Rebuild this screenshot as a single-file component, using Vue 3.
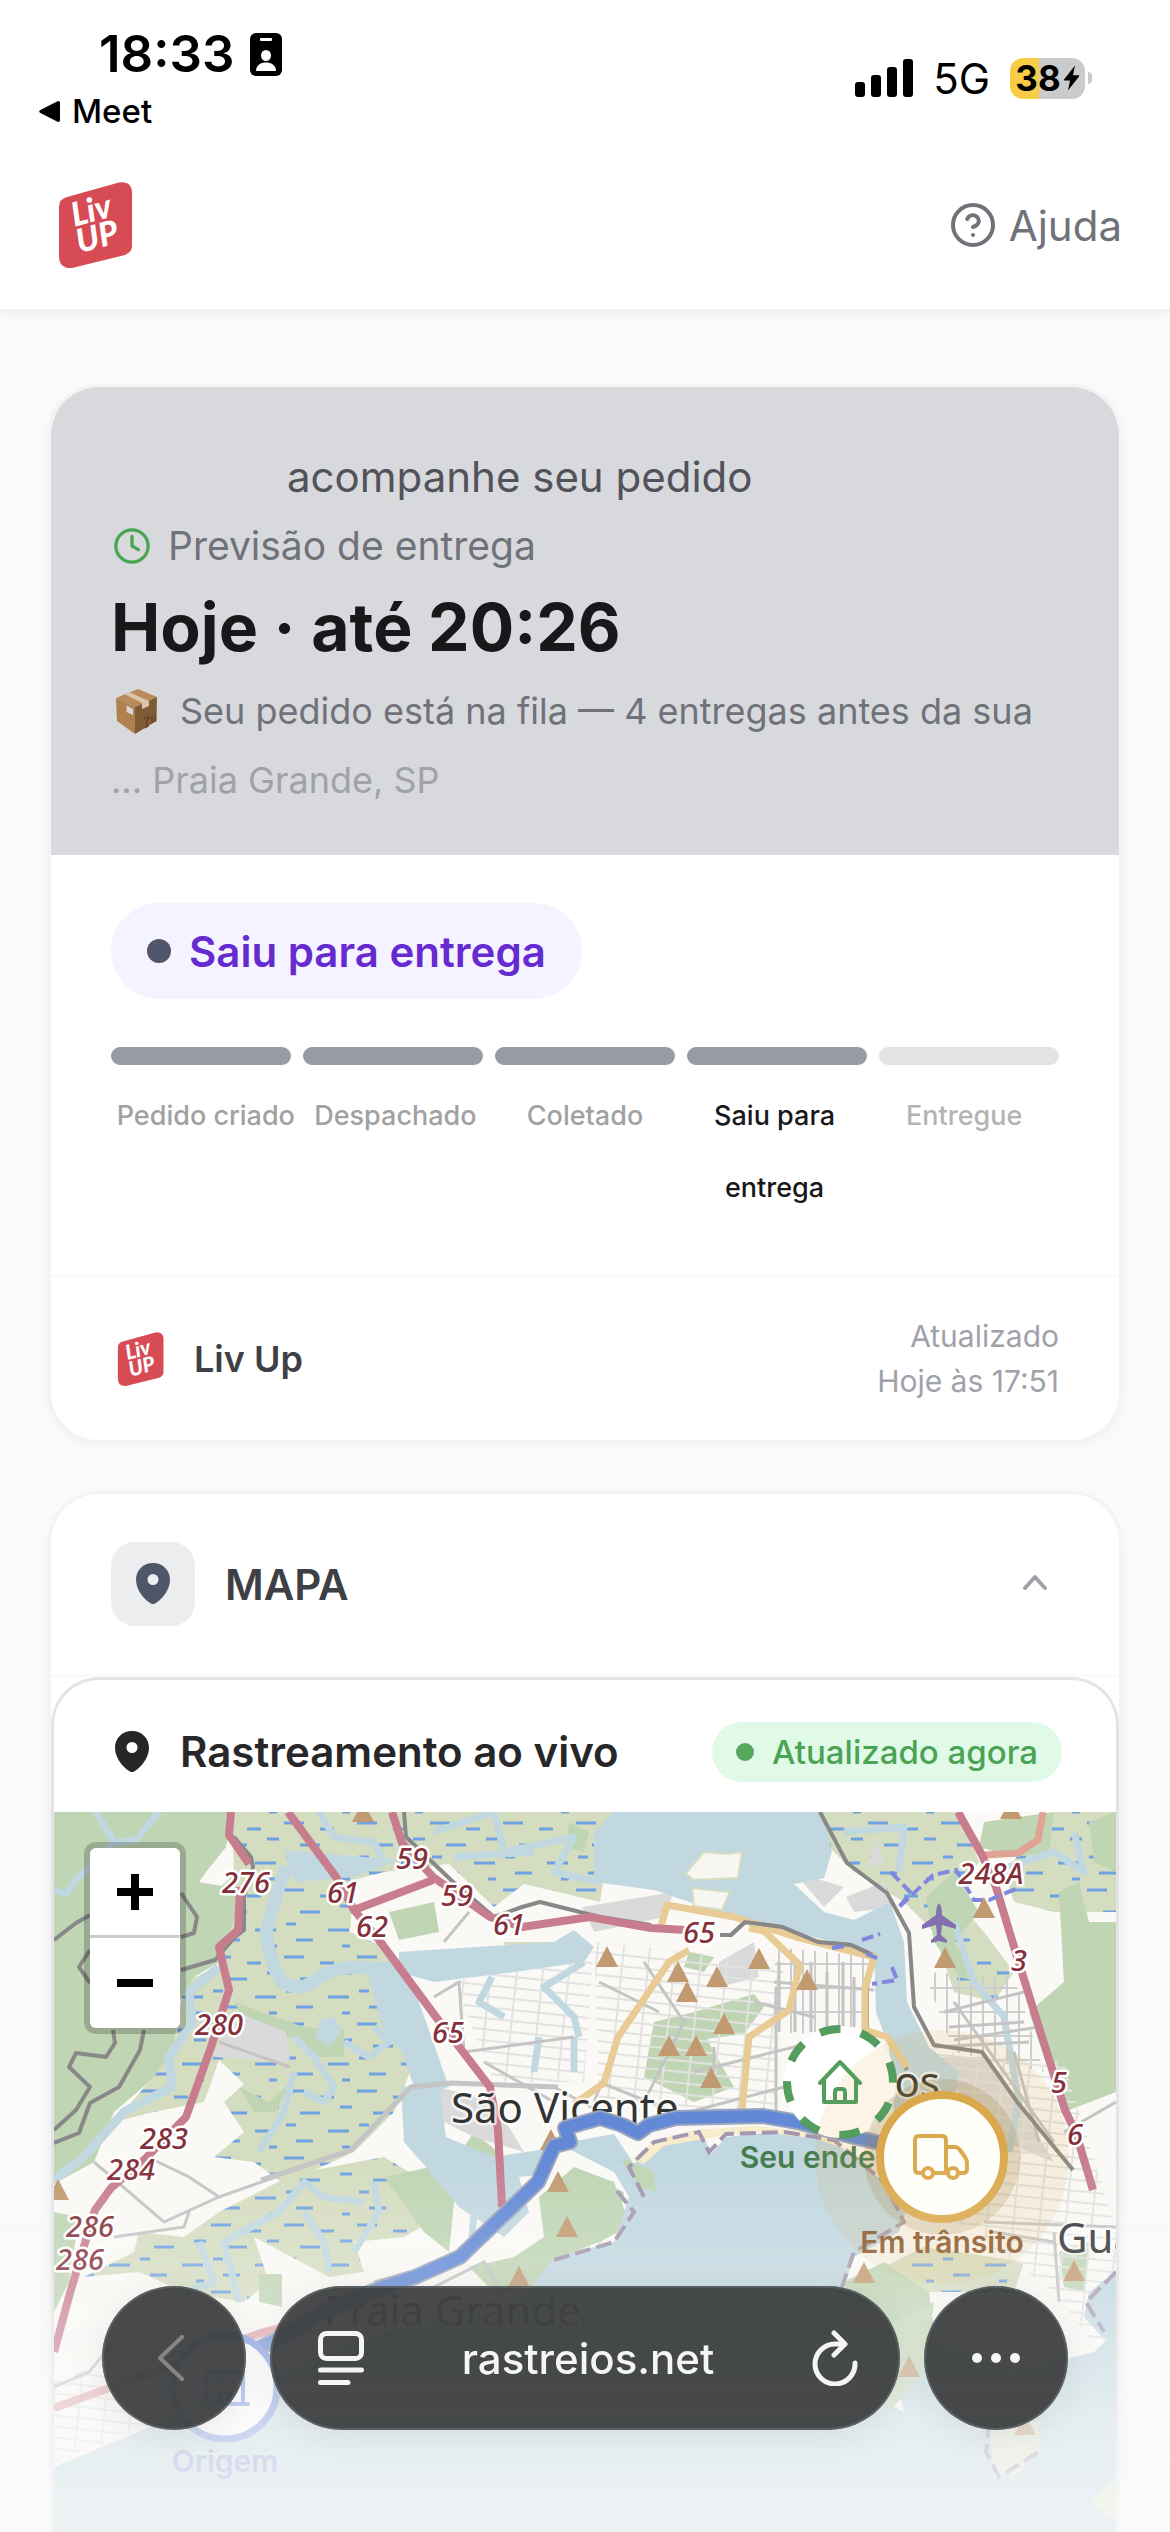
<script setup>
import { ref } from 'vue'

const steps = [
  { label: 'Pedido criado', state: 'done' },
  { label: 'Despachado', state: 'done' },
  { label: 'Coletado', state: 'done' },
  { label: 'Saiu para entrega', state: 'current' },
  { label: 'Entregue', state: 'pending' },
]

const mapOpen = ref(true)

const roadRefs = [
  ['276', 192, 81], ['61', 289, 91], ['62', 318, 125], ['59', 358, 57], ['59', 403, 94],
  ['61', 455, 123], ['65', 394, 231], ['280', 165, 223], ['283', 110, 337], ['284', 77, 368],
  ['286', 36, 425], ['286', 26, 458], ['65', 645, 131], ['248A', 937, 72], ['3', 965, 159],
  ['5', 1005, 281], ['6', 1021, 333],
]

const peaks = [
  [309, 0], [553, 145], [624, 160], [663, 165], [705, 147], [753, 168], [633, 180], [670, 212],
  [615, 234], [642, 234], [657, 266], [930, 96], [891, 146], [957, -3], [497, 328], [504, 370],
  [513, 415], [465, 465], [4, 378], [810, 461], [1020, 459], [855, 555], [971, 613],
]
</script>

<template>
  <div class="page">
    <header class="top">
      <div class="status">
        <div class="status-left">
          <div class="time">
            <span>18:33</span>
            <svg width="32" height="43" viewBox="0 0 32 43" aria-hidden="true">
              <rect width="32" height="43" rx="6" />
              <rect x="10" y="5" width="12" height="3" rx="1" fill="#fff" />
              <ellipse cx="16" cy="22.500" rx="5" ry="5.500" fill="#fff" />
              <path d="M6 38c0-6 5-8.500 10-8.500S26 32 26 38z" fill="#fff" />
            </svg>
          </div>
          <a class="back-app" href="#meet">
            <svg width="21" height="21" viewBox="0 0 21 21" aria-hidden="true">
              <path d="M1 9.300 18.500.300Q21-.500 21 2v17q0 2.500-2.500 1.700L1 11.700Q-.600 10.500 1 9.300z" />
            </svg>
            Meet
          </a>
        </div>
        <div class="status-right">
          <svg width="58" height="38" viewBox="0 0 58 38" aria-hidden="true">
            <rect y="23" width="10" height="15" rx="3" />
            <rect x="16" y="16" width="10" height="22" rx="3" />
            <rect x="32" y="8" width="10" height="30" rx="3" />
            <rect x="48" width="10" height="38" rx="3" />
          </svg>
          <span class="network">5G</span>
          <span class="battery">
            <span class="level">38<svg width="17" height="26" viewBox="0 0 17 26" aria-hidden="true"><path d="M12 .500 1 14.500q-.600 1 .500 1h5.500L5 25.500 16 11.500q.800-1.200-.500-1.200H10z" /></svg></span>
            <span class="tip"></span>
          </span>
        </div>
      </div>
      <nav class="nav">
        <svg class="logo" viewBox="0 0 96 96" role="img" aria-label="Liv Up">
          <path d="M19 20 71 5.500Q84 4 84 16V69Q84 75 77 78L24 91Q11 92 11 79V30Q11 22 19 20Z" fill="#d64b54" />
          <g class="logo-text" transform="rotate(-15 48 48)">
            <text x="47" y="44">Liv</text>
            <text x="46" y="71">UP</text>
          </g>
        </svg>
        <a class="help" href="#ajuda">
          <svg width="48" height="48" viewBox="0 0 24 24" class="line" aria-hidden="true">
            <circle cx="12" cy="12" r="10" />
            <path d="M9.100 9a3 3 0 0 1 5.800 1c0 2-2.900 3-2.900 3M12 17h.010" />
          </svg>
          Ajuda
        </a>
      </nav>
    </header>

    <main class="content">
      <section class="card">
        <div class="summary">
          <p class="follow">acompanhe seu pedido</p>
          <p class="forecast">
            <svg width="42" height="42" viewBox="-1 -1 26 26" class="line clock" aria-hidden="true">
              <circle cx="12" cy="12" r="10" />
              <path d="M12 6v6l4 2.300" />
            </svg>
            Previsão de entrega
          </p>
          <h1>Hoje · até 20:26</h1>
          <p class="queue">
            <svg width="51" height="48" viewBox="0 0 51 48" aria-hidden="true">
              <path d="M5 11 27 2 46 10 24 20z" fill="#b98a5c" />
              <path d="M5 11 24 20V47L6 34z" fill="#b0814f" />
              <path d="M46 10 24 20V47L45.500 34z" fill="#7f5a36" />
              <path d="M14 7.500 19 5.500 38 14V19L31 22V16z" fill="#dcc5a8" />
              <path d="M15.500 18.500 22 22V28L15.500 25z" fill="#d8d8d6" />
              <path d="M33 32l5-2q-.500 4-2.500 4.500v5M34 41l4-2M41 29v7M44 28v7" stroke="#54391f" fill="none" />
            </svg>
            Seu pedido está na fila — 4 entregas antes da sua
          </p>
          <p class="city">... Praia Grande, SP</p>
        </div>

        <div class="progress">
          <div class="state"><span class="state-dot"></span>Saiu para entrega</div>
          <div class="bars">
            <span v-for="s in steps" :key="s.label" class="bar" :class="s.state"></span>
          </div>
          <ol class="labels">
            <li v-for="s in steps" :key="s.label" :class="s.state">{{ s.label }}</li>
          </ol>
        </div>

        <footer class="store">
          <svg class="logo small" viewBox="0 0 96 96" role="img" aria-label="Liv Up">
            <path d="M19 20 71 5.500Q84 4 84 16V69Q84 75 77 78L24 91Q11 92 11 79V30Q11 22 19 20Z" fill="#d64b54" />
            <g class="logo-text" transform="rotate(-15 48 48)">
              <text x="47" y="44">Liv</text>
              <text x="46" y="71">UP</text>
            </g>
          </svg>
          <strong>Liv Up</strong>
          <p class="updated">Atualizado<br />Hoje às 17:51</p>
        </footer>
      </section>

      <section class="card map-card">
        <button class="toggle" type="button" :aria-expanded="mapOpen" @click="mapOpen = !mapOpen">
          <span class="tile">
            <svg width="42" height="42" viewBox="0 0 42 42" aria-hidden="true">
              <path fill-rule="evenodd" d="M21 0C11 0 4 7.500 4 16.500 4 28 13 37 19 40.500q2 1 4 0C29 37 38 28 38 16.500 38 7.500 31 0 21 0zm0 11a5.500 5.500 0 1 1 0 11 5.500 5.500 0 0 1 0-11z" />
            </svg>
          </span>
          <span class="toggle-title">MAPA</span>
          <svg width="48" height="48" viewBox="0 0 48 48" class="chevron" aria-hidden="true">
            <path d="M14 28 24 17 34 28" />
          </svg>
        </button>

        <div v-if="mapOpen" class="live">
          <div class="live-head">
            <svg width="42" height="42" viewBox="0 0 42 42" aria-hidden="true">
              <path fill-rule="evenodd" d="M21 0C11 0 4 7.500 4 16.500 4 28 13 37 19 40.500q2 1 4 0C29 37 38 28 38 16.500 38 7.500 31 0 21 0zm0 11a5.500 5.500 0 1 1 0 11 5.500 5.500 0 0 1 0-11z" />
            </svg>
            <h2>Rastreamento ao vivo</h2>
            <span class="fresh"><span class="fresh-dot"></span>Atualizado agora</span>
          </div>

          <div class="map">
            <svg class="map-art" viewBox="0 0 1062 720" preserveAspectRatio="xMidYMid slice">
              <defs>
                <pattern id="marsh" width="73" height="67" patternUnits="userSpaceOnUse" patternTransform="translate(9 5)">
                  <rect width="73" height="67" fill="#d5ddc0" />
                  <path d="M2 6h20M38 12h14M58 22h12M18 28h20M4 40h10M46 46h21M14 56h17M60 62h8" stroke="#6fa2e2" stroke-width="3" />
                </pattern>
                <pattern id="streets" width="26" height="22" patternUnits="userSpaceOnUse" patternTransform="rotate(6)">
                  <path d="M0 6H26M9 0V22M0 17H26" stroke="#e2e2e0" stroke-width="2" fill="none" />
                </pattern>
                <pattern id="dense" width="12" height="24" patternUnits="userSpaceOnUse">
                  <path d="M0 8H12M5 0V24" stroke="#cdcdcd" stroke-width="2" fill="none" />
                </pattern>
              </defs>
              <rect width="1062" height="720" fill="#faf9f5" />

              <!-- wetlands -->
              <g fill="url(#marsh)">
                <path d="M178 0H560L546 90 470 72 440 95 395 52 330 60 300 68 296 120 330 135 345 160 340 200 360 250 340 300 300 340 230 372 200 350 160 345 190 320 170 290 190 272 165 248 150 290 100 300 60 310 95 270 120 240 130 170 165 155 150 90 180 62z" />
                <path d="M740 0H905L925 50 900 85 930 120 960 160 940 190 900 180 880 120 850 90 800 60 770 30z" />
                <path d="M1000 0H1062V100H1000L960 90 950 60z" />
                <path d="M130 425 165 400 240 362 330 345 380 375 400 395 350 425 300 430 310 460 275 465 200 425 215 470 190 490 130 480 85 460 30 465 80 440 85 420z" />
                <path d="M450 130H500V145H455zM830 455 870 435 970 450 960 480 840 480z" />
              </g>

              <!-- woods -->
              <g fill="#bfd5b4">
                <path d="M0 0H180L172 35 152 60 145 70 190 78 165 150 140 165 125 190 120 240 95 270 60 300 40 350 0 372z" />
                <path d="M180 190 250 215 290 218 290 245 265 245 245 225 200 225z" />
                <path d="M335 100 380 90 385 120 345 128zM185 275 215 290 235 272 222 300 200 300zM515 10 535 20 530 40 512 35z" />
                <path d="M930 10 1000 0 995 40 960 45 925 35z" />
                <path d="M872 85 900 60 925 100 900 130 925 170 905 165 880 130z" />
                <path d="M1062 0 1035 10 1040 50 1062 60zM1005 80 1025 70 1035 110 1062 110V280L1010 300 985 230 975 200 1010 170z" />
                <path d="M640 200 700 182 710 195 690 222 645 228zM600 210 640 200 660 240 680 275 640 290 590 265z" />
                <path d="M635 140 660 145 650 160 630 155z" />
                <path d="M400 390 448 375 450 345 420 320 400 350 330 365 370 420 395 440z" />
                <path d="M485 385 520 355 560 370 575 410 545 430 520 440 490 475 440 480 415 455 460 445 490 425z" />
                <path d="M545 370 570 380 565 420 545 430z" />
                <path d="M790 470 830 450 875 480 880 520 850 560 830 600 800 560zM1005 440 1035 430 1030 480 1010 475z" />
                <path d="M0 400 25 405 15 470 0 500zM205 462 228 462 228 495 205 490z" />
              </g>

              <!-- built-up areas -->
              <g fill="#dadada">
                <path d="M190 203 232 220 236 250 160 245 170 220zM528 95 620 80 610 105 540 120z" />
                <path d="M792 85 830 70 842 95 800 100zM385 275 440 290 470 340 420 325 390 310zM665 150 700 130 705 165 665 175z" />
                <path d="M885 245 930 245 970 300 1000 350 950 330 910 290z" />
                <path d="M740 60 790 75 770 95zM820 25 830 50 815 55z" />
              </g>
              <path d="M720 135 820 145 805 225 725 220z" fill="url(#dense)" />
              <path d="M870 160 960 165 990 260 900 240z" fill="url(#dense)" />
              <path d="M540 130 730 150 720 300 545 290z" fill="url(#streets)" />
              <path d="M400 170 540 130 530 270 440 270z" fill="url(#streets)" />
              <path d="M880 240 1010 250 1062 420V560L1000 480 890 400z" fill="url(#streets)" />
              <path d="M0 570 110 530 200 540 130 600 0 650z" fill="url(#streets)" />

              <!-- open water -->
              <g fill="#c1d8e0">
                <path d="M540 20 560 0H768L778 40 770 66 740 72 770 100 800 108 836 90 850 130 853 190 875 235 905 260 900 290 920 330 840 300 835 235 822 200 820 140 760 125 700 115 650 95 600 78 540 70z" />
                <path d="M345 140 500 130 520 118 540 135 530 150 460 160 380 170 345 160z" />
                <path d="M230 38 345 48 300 65 240 70zM265 208 280 205 288 218 275 235 262 225z" />
                <path d="M310 150 345 150 365 190 395 275 385 278 360 275 348 240 330 220z" />
                <path d="M347 275 385 270 392 325 440 345 505 335 495 362 465 365 475 400 450 425 405 395 372 355 350 330z" />
                <path d="M505 332 560 322 580 352 605 332 650 325 657 342 672 325 720 320 780 330 830 370 852 400 845 420 800 445 790 475 795 520 830 590 850 600 840 560 880 530 960 560 1040 540 1062 520V720H0V655L180 580 330 520 440 500 470 485 500 445 560 430 575 385 560 360z" />
                <path d="M1062 460 1035 480 1030 505 1048 525 1062 530z" />
              </g>
              <path d="M636 56 650 40 672 42 688 40 684 66 640 68 632 62zM638 76 676 80 668 98 640 94z" fill="#f7f6f1" stroke="#d5ddc0" stroke-width="2" />
              <path d="M578 348 600 328 640 318 700 314 760 320 800 340 760 326 700 320 655 326 610 334 590 352z" fill="#f7eccb" />
              <path d="M566 345 600 360 602 380 585 375zM545 375 565 380 568 410 545 432z" fill="#bfd5b4" />
              <path d="M840 510 880 490 870 560 835 600 790 560 800 520z" fill="#c6dab9" />
              <path d="M935 615 985 610 985 640 960 665 940 660zM1035 690 1062 665V710z" fill="#dce5cf" />

              <!-- creeks -->
              <g fill="none" stroke="#c1d8e0" stroke-width="7" stroke-linejoin="round">
                <path d="M232 55Q222 80 212 120Q215 150 228 170 248 182 265 165 290 150 330 158" stroke-width="13" />
                <path d="M42 0 60 30 82 28 105 0M60 30 20 70 12 82 0 78" />
                <path d="M165 155 135 180 138 210 115 245 118 275 70 300 30 345 0 368" stroke-width="9" />
                <path d="M265 0 280 25 320 30 330 50M380 20 440 0 450 40 520 25 500 60 545 70M400 45 480 40" />
                <path d="M240 225 260 245 280 275 270 290 250 280M320 215 335 230 315 245 290 230M240 260 230 300 205 340" />
                <path d="M438 165 425 190 450 205M530 150 490 175 520 205 525 225M485 225 480 260M520 225V260" />
                <path d="M790 20 850 15 845 60M1020 20 1030 60 1000 40 940 60M900 110 920 170 950 205 965 290 955 340" />
                <path d="M310 390 270 385 250 370 225 400 170 430 185 490M250 400 270 430 275 460M300 440 325 400 320 370M145 430 160 470 130 480" />
                <path d="M400 360 420 400 418 425" />
              </g>

              <!-- minor roads -->
              <g fill="none" stroke="#c4c4c4" stroke-width="3">
                <path d="M207 368 297 338 357 275 397 271 504 275" stroke-width="5" />
                <path d="M165 230 236 255M390 130 415 100M380 185 405 170 410 240 520 225M430 250 500 290" />
                <path d="M40 350 110 410 165 385 270 348M165 385 135 365 100 348M60 425 130 415 135 400" />
                <path d="M545 170 605 200M590 150 630 210 590 290M640 260 700 245 760 230M545 270 620 300M500 275 546 300" />
                <path d="M725 150V220M741 150V220M757 150V220M773 160V220M789 150V215M800 165V215M720 170 820 178" />
                <path d="M635 300 730 275M722 175V300M700 190 760 205M660 235V260 M560 240 540 290" />
                <path d="M890 200 970 180M895 215 970 210M900 228 985 215M880 235 975 230M900 190 1000 330M960 240 985 330M930 410 1062 415M940 420 1000 430M1010 320 1062 290M1000 420 1005 490" />
                <path d="M0 575 35 560 60 530M370 480 430 450 470 520M320 470 400 450" />
              </g>

              <!-- railways -->
              <g fill="none" stroke="#888" stroke-width="4" stroke-linejoin="round">
                <path d="M350 0 352 25 397 68 440 105 468 95 486 90 546 105 597 113M666 123H677L691 110 728 115 764 130 797 133 820 143 813 175V218L833 225 853 258" />
                <path d="M766 0 793 51 833 81 855 121 860 195 880 233 928 240 964 291 1019 358" />
                <path d="M0 128 22 111 36 103M127 81 143 105 140 121 127 125M36 138 25 155 36 171M127 158 161 148 181 125 190 118V85L199 55 197 45 180 25" />
                <path d="M59 218 61 231 52 245 22 241 15 255 36 275 22 298 0 318M90 218 86 238 65 275 36 291 25 321 0 331" />
              </g>

              <!-- main roads -->
              <g fill="none" stroke="#e9cb95" stroke-width="7" stroke-linejoin="round">
                <path d="M606 118 613 93 680 105 742 125 820 145 811 175V218L833 225 853 255" />
                <path d="M695 116 710 119 746 153 735 198 695 225 688 298M635 138 615 150 564 225 550 271 520 292" />
              </g>
              <path d="M666 123H677L691 110 728 115 764 130 797 133 818 143" fill="none" stroke="#888" stroke-width="4" />
              <path d="M989 0 984 28 964 41 931 43" fill="none" stroke="#e0a393" stroke-width="7" />
              <g fill="none" stroke="#c87d8f" stroke-width="8" stroke-linejoin="round">
                <path d="M177 0 175 23 195 52M186 75 184 118 165 135 175 178 157 235 132 305 90 348 57 376 41 398 31 431 16 481 0 540" />
                <path d="M234 0 282 65 300 98 379 68M338 0 348 31 379 65 436 105 468 115 536 105 597 116 632 118" />
                <path d="M300 98 325 128 382 205 436 275 444 318 448 395" />
                <path d="M904 0 928 43 942 75 964 148 993 241 1011 298 1022 321 1039 378" />
                <path d="M0 596 111 556 207 521 250 510" stroke="#dfa3a8" />
              </g>

              <!-- ferries and maritime limits -->
              <g fill="none" stroke="#7f88dd" stroke-width="4" stroke-dasharray="12 5">
                <path d="M837 60 857 81 844 96 879 63 902 58 920 88 935 88 964 76M808 128 826 122M778 136 792 134M812 142 828 148M838 155 843 168 818 172" />
              </g>
              <path d="M590 385 575 355 600 330 645 320 655 340 672 322 730 320 780 328 830 370 850 410 800 440 788 475M500 448 560 430 580 400 560 375M935 610 932 640 945 665 985 640M1062 460 1032 490 1050 520" fill="none" stroke="#a498b0" stroke-width="4" stroke-dasharray="16 6" />
              <path d="M885 91q3 3 3 12l14 10v4l-14-4-1 10 6 5v3l-8-2-8 2v-3l6-5-1-10-14 4v-4l14-10q0-9 3-12z" fill="#8470b0" />

              <path v-for="(p, i) in peaks" :key="i" :d="`M${p[0] - 11} ${p[1] + 10}L${p[0]} ${p[1] - 11}L${p[0] + 11} ${p[1] + 10}z`" fill="#c19a72" />

              <g class="ref">
                <text v-for="(r, i) in roadRefs" :key="i" :x="r[1]" :y="r[2]">{{ r[0] }}</text>
              </g>
              <g class="place">
                <text x="397" y="311">São Vicente</text>
                <text x="886" y="285" text-anchor="end">Santos</text>
                <text x="1003" y="441">Guarujá</text>
                <text x="270" y="514">Praia Grande</text>
              </g>

              <!-- delivery route -->
              <g fill="none" stroke-linejoin="round" stroke-linecap="round">
                <path d="M888 345 800 325 744 310 708 304 622 306 595 313 584 321 568 313 546 306 511 316 516 330 500 334 484 370 406 445 361 465 329 475 272 498 236 521 207 535 171 575" stroke="#9aa5bd" stroke-width="16" />
                <path d="M888 345 800 325 744 310 708 304 622 306 595 313 584 321 568 313 546 306 511 316 516 330 500 334 484 370 406 445 361 465 329 475 272 498 236 521 207 535 171 575" stroke="#6288d6" stroke-width="12" />
              </g>

              <!-- origin -->
              <circle cx="171" cy="575" r="52" fill="#fff" stroke="#7795e0" stroke-width="7" />
              <path d="M153 592V560H189V592M148 592H194M163 570H166M176 570H179M166 592V582H176V592" fill="none" stroke="#7795e0" stroke-width="4" stroke-linecap="round" />
              <text class="pin-label" x="171" y="660" fill="#8d99d4">Origem</text>

              <!-- destination -->
              <text class="pin-label" x="786" y="356" fill="#437a4e">Seu endereço</text>
              <circle cx="786" cy="270" r="56" fill="#fff" />
              <circle cx="888" cy="345" r="127" fill="#e0a23a" fill-opacity=".120" />
              <circle cx="888" cy="345" r="78" fill="#a08040" fill-opacity=".220" />
              <circle cx="786" cy="270" r="53" fill="none" stroke="#559c5f" stroke-width="8" stroke-dasharray="20.800 20.830" transform="rotate(-112 786 270)" />
              <g fill="none" stroke="#559c5f" stroke-width="4" stroke-linecap="round" stroke-linejoin="round" transform="translate(786 270)">
                <path d="M-20 1 0-20 20 1M-16-3V20H16V-3M-5 20V10Q-5 7-2 7H2Q5 7 5 10V20" />
              </g>

              <!-- courier -->
              <circle cx="888" cy="345" r="62" fill="#fffffa" stroke="#dba94d" stroke-width="8" />
              <g fill="none" stroke="#dba94d" stroke-width="4" stroke-linecap="round" stroke-linejoin="round" transform="translate(887 345)">
                <path d="M-19 16H-22Q-26 16-26 12V-17Q-26-21-22-21H1Q5-21 5-17V16H-7M5-10H14Q17-10 19-7L24 0Q26 3 26 6V12Q26 16 22 16H18M5 16H7" />
                <circle cx="-13" cy="16" r="5" /><circle cx="12" cy="16" r="5" />
              </g>
              <text class="pin-label" x="888" y="441" fill="#8a5526">Em trânsito</text>
            </svg>
            <div class="zoom">
              <button type="button" aria-label="Aumentar zoom"><svg width="36" height="36" viewBox="0 0 36 36"><path d="M0 18H36M18 0V36" /></svg></button>
              <button type="button" aria-label="Diminuir zoom"><svg width="36" height="36" viewBox="0 0 36 36"><path d="M0 18H36" /></svg></button>
            </div>
          </div>
        </div>
      </section>
    </main>

    <div class="browser">
      <button class="glass round" type="button" aria-label="Voltar">
        <svg width="32" height="46" viewBox="0 0 32 46" fill="none" stroke="#858587" stroke-width="4" stroke-linecap="round" stroke-linejoin="round"><path d="M24 2 2 23 24 44" /></svg>
      </button>
      <div class="glass address">
        <button type="button" aria-label="Opções da página">
          <svg width="46" height="54" viewBox="0 0 46 54" fill="none" stroke="#f5f5f5" stroke-width="5" stroke-linecap="round"><rect x="2.500" y="2.500" width="41" height="25" rx="6" /><path d="M2.500 39H43.500M2.500 51.500H30" /></svg>
        </button>
        <span class="host">rastreios.net</span>
        <button type="button" aria-label="Recarregar">
          <svg width="46" height="56" viewBox="0 0 46 56" fill="none" stroke="#f5f5f5" stroke-width="5" stroke-linecap="round" stroke-linejoin="round"><path d="M22 3 33 14 22 25M33 14H23A20 20 0 1 0 43 33" /></svg>
        </button>
      </div>
      <button class="glass round" type="button" aria-label="Mais">
        <svg width="50" height="12" viewBox="0 0 50 12" fill="#f5f5f5"><circle cx="6" cy="6" r="5" /><circle cx="25" cy="6" r="5" /><circle cx="44" cy="6" r="5" /></svg>
      </button>
    </div>
  </div>
</template>

<style>
body {
  background: #fafafa;
}
</style>

<style scoped>
.page {
  font-family: Inter, "Liberation Sans", sans-serif;
  color: #18181b;
}
p, h1, h2, ol {
  margin: 0;
  padding: 0;
}
button {
  margin: 0;
  padding: 0;
  border: 0;
  background: none;
  font: inherit;
  color: inherit;
}
a {
  color: inherit;
  text-decoration: none;
}
svg {
  display: block;
  flex: none;
}
.line {
  fill: none;
  stroke: currentColor;
  stroke-width: 2;
  stroke-linecap: round;
  stroke-linejoin: round;
}

.top {
  background: #fff;
  border-bottom: 3px solid #f3f3f3;
  box-shadow: 0 3px 9px rgba(0, 0, 0, 0.04);
}
.status {
  display: flex;
  justify-content: space-between;
  align-items: center;
  padding: 24px 78px 12px 39px;
  color: #000;
}
.status-left {
  display: flex;
  flex-direction: column;
  gap: 9px;
}
.time {
  display: flex;
  align-items: center;
  gap: 16px;
  padding-left: 60px;
  font-size: 51px;
  font-weight: 600;
  line-height: 60px;
}
.back-app {
  display: flex;
  align-items: center;
  gap: 12px;
  font-size: 33px;
  font-weight: 500;
  line-height: 36px;
}
.status-right {
  display: flex;
  align-items: center;
  gap: 20px;
  padding-top: 3px;
}
.network {
  font-size: 42px;
}
.battery {
  display: flex;
  align-items: center;
  gap: 3px;
}
.level {
  display: flex;
  align-items: center;
  justify-content: center;
  gap: 2px;
  width: 75px;
  height: 41px;
  border-radius: 13px;
  background: linear-gradient(90deg, #f7cd46 39%, #cbcbcb 39%);
  font-size: 35px;
  font-weight: 700;
}
.tip {
  width: 4px;
  height: 12px;
  border-radius: 0 4px 4px 0;
  background: #cbcbcb;
}
.nav {
  display: flex;
  justify-content: space-between;
  align-items: center;
  padding: 36px 48px;
}
.logo {
  width: 96px;
  height: 96px;
}
.logo.small {
  width: 60px;
  height: 60px;
}
.logo-text {
  font-family: Lato, sans-serif;
  font-size: 33px;
  font-weight: 900;
  font-style: italic;
  fill: #fff;
  text-anchor: middle;
}
.help {
  display: flex;
  align-items: center;
  gap: 12px;
  font-size: 42px;
  color: #71717a;
}

.content {
  display: flex;
  flex-direction: column;
  gap: 48px;
  padding: 72px 48px 0;
}
.card {
  border: 3px solid #f3f3f3;
  border-radius: 51px;
  background: #fff;
  box-shadow: 0 3px 9px rgba(0, 0, 0, 0.04);
  overflow: hidden;
}
.summary {
  display: flex;
  flex-direction: column;
  gap: 12px;
  padding: 60px 60px 48px;
  background: #d8d9dd;
  font-size: 36px;
  line-height: 54px;
  color: #71717a;
}
.follow {
  padding-left: 176px;
  font-size: 42px;
  line-height: 60px;
  color: #52525b;
}
.forecast {
  display: flex;
  align-items: center;
  gap: 15px;
  font-size: 39px;
}
.clock {
  color: #47a552;
}
h1 {
  font-size: 66px;
  font-weight: 700;
  line-height: 84px;
  color: #18181b;
}
.queue {
  display: flex;
  align-items: center;
  gap: 18px;
  line-height: 60px;
}
.city {
  color: #a1a1aa;
}

.progress {
  padding: 48px 60px 51px;
}
.state {
  display: inline-flex;
  align-items: center;
  gap: 18px;
  height: 96px;
  padding: 0 36px;
  border-radius: 48px;
  background: #f5f3ff;
  font-size: 42px;
  font-weight: 600;
  color: #652bd0;
  vertical-align: top;
}
.state-dot {
  width: 24px;
  height: 24px;
  border-radius: 50%;
  background: #4f5669;
}
.bars {
  display: flex;
  gap: 12px;
  margin-top: 48px;
}
.bar {
  flex: 1;
  height: 18px;
  border-radius: 9px;
  background: #979ba5;
}
.bar.pending {
  background: #e4e4e6;
}
.labels {
  display: flex;
  margin-top: 15px;
  list-style: none;
  font-size: 27px;
  font-weight: 500;
  line-height: 72px;
  text-align: center;
  color: #a1a1a1;
}
.labels li {
  flex: 1 1 0;
  min-width: 0;
}
.labels .current {
  color: #18181b;
}
.labels .pending {
  color: #b4b4b4;
}
.store {
  display: flex;
  align-items: center;
  gap: 23px;
  padding: 36px 60px;
  border-top: 3px solid #fafafa;
  font-size: 36px;
}
.store strong {
  font-weight: 600;
  color: #3f3f46;
}
.updated {
  margin-left: auto;
  font-size: 30px;
  line-height: 45px;
  text-align: right;
  color: #a1a1aa;
}

.map-card {
  border-bottom: 0;
  border-radius: 51px 51px 0 0;
}
.toggle {
  display: flex;
  align-items: center;
  gap: 30px;
  width: 100%;
  padding: 48px 60px;
  border-bottom: 3px solid #fafafa;
}
.tile {
  display: flex;
  align-items: center;
  justify-content: center;
  width: 84px;
  height: 84px;
  border-radius: 24px;
  background: #ecedef;
  fill: #4f5669;
}
.toggle-title {
  font-size: 42px;
  font-weight: 600;
  color: #3f3f46;
}
.chevron {
  margin-left: auto;
  fill: none;
  stroke: #a1a1aa;
  stroke-width: 4;
  stroke-linecap: round;
  stroke-linejoin: round;
}
.live {
  border: 3px solid #e4e4e6;
  border-bottom: 0;
  border-radius: 48px 48px 0 0;
  overflow: hidden;
}
.live-head {
  display: flex;
  align-items: center;
  padding: 36px 54px 24px 57px;
  fill: #27272a;
}
h2 {
  margin-left: 27px;
  font-size: 42px;
  font-weight: 600;
  line-height: 72px;
  color: #27272a;
}
.fresh {
  display: flex;
  align-items: center;
  gap: 18px;
  height: 60px;
  margin-left: auto;
  padding: 0 24px;
  border-radius: 30px;
  background: #e1fae8;
  font-size: 33px;
  font-weight: 500;
  color: #4ba355;
}
.fresh-dot {
  width: 18px;
  height: 18px;
  border-radius: 50%;
  background: #56a65f;
}
.map {
  position: relative;
}
.map-art {
  width: 100%;
  height: 720px;
}
.ref {
  font: italic 500 29px "Noto Sans", sans-serif;
  fill: #84303a;
  stroke: #fff;
  stroke-width: 5px;
  stroke-linejoin: round;
  paint-order: stroke;
  text-anchor: middle;
}
.place {
  font: 42px "Noto Sans", sans-serif;
  fill: #333;
  stroke: rgba(255, 255, 255, 0.7);
  stroke-width: 5px;
  stroke-linejoin: round;
  paint-order: stroke;
}
.pin-label {
  font: 600 30px Inter, sans-serif;
  text-anchor: middle;
}
.zoom {
  position: absolute;
  top: 30px;
  left: 30px;
  border: 6px solid rgba(0, 0, 0, 0.2);
  border-radius: 12px;
}
.zoom button {
  display: flex;
  align-items: center;
  justify-content: center;
  width: 90px;
  height: 90px;
  background: #fff;
  border-radius: 0 0 6px 6px;
}
.zoom button:first-child {
  border-bottom: 3px solid #ccc;
  border-radius: 6px 6px 0 0;
}
.zoom svg {
  stroke: #000;
  stroke-width: 8;
}

.browser {
  position: fixed;
  right: 0;
  bottom: 0;
  left: 0;
  display: flex;
  gap: 24px;
  padding: 136px 102px 102px;
  background: linear-gradient(rgba(250, 250, 250, 0), rgba(250, 250, 250, 0.25) 36%, rgba(250, 250, 250, 0.65) 73%, rgba(250, 250, 250, 0.77));
}
.glass {
  display: flex;
  align-items: center;
  height: 144px;
  border-radius: 72px;
  background: rgba(60, 62, 63, 0.94);
  box-shadow: inset 0 0 0 2px rgba(110, 120, 122, 0.5), 0 6px 36px rgba(0, 0, 0, 0.08);
}
.round {
  flex: none;
  justify-content: center;
  width: 144px;
}
.address {
  flex: 1;
  justify-content: space-between;
  padding: 0 42px 0 48px;
}
.host {
  font-size: 42px;
  font-weight: 500;
  color: #f5f5f7;
}
</style>
